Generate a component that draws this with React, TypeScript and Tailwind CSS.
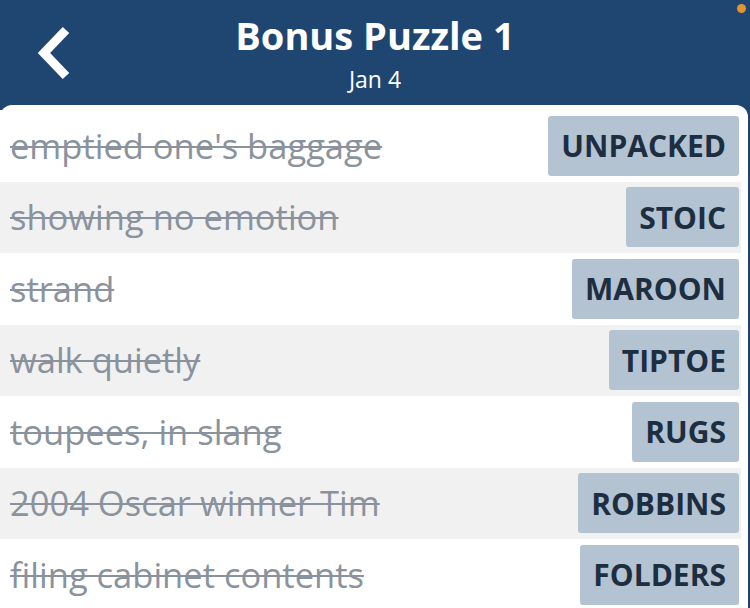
import React from 'react'

const rows = [
    { clue: "emptied one's baggage", answer: 'UNPACKED' },
    { clue: 'showing no emotion', answer: 'STOIC' },
    { clue: 'strand', answer: 'MAROON' },
    { clue: 'walk quietly', answer: 'TIPTOE' },
    { clue: 'toupees, in slang', answer: 'RUGS' },
    { clue: '2004 Oscar winner Tim', answer: 'ROBBINS' },
    { clue: 'filing cabinet contents', answer: 'FOLDERS' },
]

const App = () => {
    return (
        <div className="relative w-[750px] h-[608px] overflow-hidden bg-[#1f4571] font-['Open_Sans',sans-serif]">
            <span className="absolute right-[4px] top-[4px] w-[9px] h-[9px] rounded-full bg-[#e0962c]" />

            <div className="relative h-[105px] flex flex-col items-center text-white">
                <button className="absolute left-[32px] top-[26px]">
                    <svg width="40" height="56" viewBox="0 0 40 56" fill="none">
                        <polyline points="34,4 12,27 34,50" stroke="white" strokeWidth="9" strokeLinejoin="miter" />
                    </svg>
                </button>
                <p className="mt-[14px] text-[38px] leading-[42px] font-bold">Bonus Puzzle 1</p>
                <p className="mt-[9px] text-[23px] leading-[28px]">Jan 4</p>
            </div>

            <div className="w-[748px] bg-white rounded-t-[12px] pt-[5px] pr-[7px]">
                {rows.map((row, i) => (
                    <div
                        key={row.answer}
                        className={`h-[71.5px] flex items-center justify-between pl-[10px] pr-[2px] ${i % 2 === 1 ? 'bg-[#f1f1f2]' : 'bg-white'}`}
                    >
                        <p className="text-[34.5px] leading-[40px] text-[#8a939d] line-through decoration-[2px]">{row.clue}</p>
                        <span className="h-[60px] flex items-center px-[13px] rounded-[3px] bg-[#b3c3d1] text-[#1d2e41] text-[30px] font-bold">
                            {row.answer}
                        </span>
                    </div>
                ))}
            </div>
        </div>
    )
}

export default App
